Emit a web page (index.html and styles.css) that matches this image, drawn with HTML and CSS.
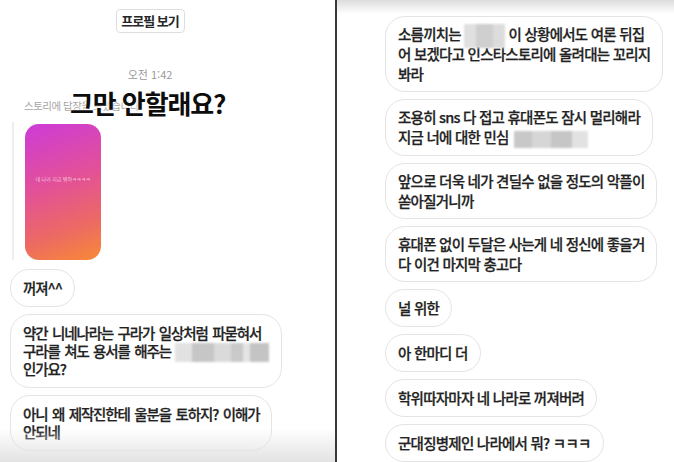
FILE: index.html
```html
<!DOCTYPE html>
<html lang="ko">
<head>
    <meta charset="UTF-8">
    <meta name="viewport" content="width=device-width, initial-scale=1.0">
    <title>DM</title>
    <link rel="stylesheet" href="styles.css">
</head>
<body>
    <div class="screen">
        <section class="panel left">
            <div class="top">
                <button class="profile-btn">프로필 보기</button>
                <div class="time">오전 1:42</div>
            </div>
            <div class="story-label">스토리에 답장을 보냈습니다</div>
            <div class="caption">그만 안할래요?</div>
            <div class="story-quote">
                <div class="story-card"><span>내 나라 지금 뭐야ㅋㅋㅋㅋ</span></div>
            </div>
            <div class="thread">
                <div class="bubble">꺼져^^</div>
                <div class="bubble">약간 니네나라는 구라가 일상처럼 파묻혀서<br>구라를 쳐도 용서를 해주는 <span class="blur blur-a"></span><br>인가요?</div>
                <div class="bubble">아니 왜 제작진한테 울분을 토하지? 이해가<br>안되네</div>
            </div>
        </section>

        <section class="panel right">
            <div class="thread">
                <div class="bubble">소름끼치는 <span class="blur blur-b"></span> 이 상황에서도 여론 뒤집<br>어 보겠다고 인스타스토리에 올려대는 꼬리지<br>봐라</div>
                <div class="bubble">조용히 sns 다 접고 휴대폰도 잠시 멀리해라<br>지금 너에 대한 민심 <span class="blur blur-c"></span></div>
                <div class="bubble">앞으로 더욱 네가 견딜수 없을 정도의 악플이<br>쏟아질거니까</div>
                <div class="bubble">휴대폰 없이 두달은 사는게 네 정신에 좋을거<br>다 이건 마지막 충고다</div>
                <div class="bubble">널 위한</div>
                <div class="bubble">아 한마디 더</div>
                <div class="bubble">학위따자마자 네 나라로 꺼져버려</div>
                <div class="bubble">군대징병제인 나라에서 뭐? ㅋㅋㅋ</div>
            </div>
        </section>
    </div>
</body>
</html>
```

FILE: styles.css
```css
body {
    margin: 0;
    background: #fff;
    font-family: "Noto Sans CJK KR", "Noto Sans", sans-serif;
    color: #222;
}
.screen {
    display: flex;
    width: 674px;
    height: 462px;
    overflow: hidden;
}
.panel {
    position: relative;
    height: 462px;
    box-sizing: border-box;
}
.left {
    width: 337px;
    padding-left: 10px;
    border-right: 2px solid #383838;
}
.left::after {
    content: "";
    position: absolute;
    left: 0;
    right: 0;
    bottom: 0;
    height: 34px;
    background: linear-gradient(rgba(230, 230, 230, 0), #e3e3e3);
}
.right {
    flex: 1;
    padding-left: 48px;
    padding-top: 16px;
}
.right::before {
    content: "";
    position: absolute;
    left: 0;
    right: 0;
    top: 0;
    height: 14px;
    background: linear-gradient(#dcdcdc, rgba(230, 230, 230, 0));
}
.top {
    width: 280px;
    text-align: center;
    padding-top: 7px;
}
.profile-btn {
    width: 69px;
    height: 24px;
    padding: 0;
    border: 1px solid #dedede;
    border-radius: 4px;
    background: #fff;
    font-family: inherit;
    font-size: 13px;
    font-weight: 700;
    color: #262626;
    letter-spacing: -1px;
}
.time {
    margin-top: 34px;
    font-size: 11px;
    line-height: 14px;
    color: #9a9a9a;
}
.story-label {
    margin-top: 18px;
    margin-left: 14px;
    font-size: 10.5px;
    line-height: 14px;
    color: #a5a5a5;
    letter-spacing: -0.5px;
}
.caption {
    position: absolute;
    left: 70px;
    top: 84px;
    font-size: 26px;
    font-weight: 700;
    color: #0d0d0d;
    letter-spacing: -1.1px;
    text-shadow: 0 0 3px #fff, 0 0 3px #fff;
}
.story-quote {
    margin-top: 9px;
    margin-left: 2px;
    height: 138px;
    border-left: 2px solid #eeeeee;
    padding-left: 11px;
    padding-top: 2px;
    box-sizing: border-box;
}
.story-card {
    width: 76px;
    height: 136px;
    border-radius: 14px;
    background: linear-gradient(160deg, #cd3bd8 0%, #e2509a 42%, #ec6a63 75%, #f88a36 100%);
    display: flex;
    align-items: center;
    justify-content: center;
}
.story-card span {
    font-size: 5px;
    color: rgba(255, 255, 255, 0.7);
    margin-bottom: 26px;
    white-space: nowrap;
}
.thread {
    display: flex;
    flex-direction: column;
    align-items: flex-start;
    gap: 7px;
}
.left .thread {
    margin-top: 9px;
}
.bubble {
    border: 1px solid #e4e4e4;
    border-radius: 20px;
    white-space: nowrap;
    font-weight: 500;
    font-size: 14.5px;
    -webkit-text-stroke: 0.25px #222;
}
.left .bubble {
    padding: 9px 12px;
    line-height: 18px;
    letter-spacing: -1.1px;
    word-spacing: 1.5px;
}
.right .bubble {
    padding: 7px 12px;
    line-height: 20px;
    letter-spacing: -0.75px;
}
.right .bubble:nth-child(n+5) {
    padding: 8px 12px;
}
.blur {
    display: inline-block;
    vertical-align: middle;
    filter: blur(1px);
}
.blur-a {
    width: 94px;
    height: 19px;
    margin: -2px 0;
    background: linear-gradient(90deg, #e2e2e2 0 18%, #c6c6c6 18% 42%, #dadada 42% 60%, #c9c9c9 60% 72%, #e4e4e4 72% 80%, #c4c4c4 80% 100%);
}
.blur-b {
    width: 41px;
    height: 24px;
    margin: -4px 0;
    background: linear-gradient(90deg, #e0e0e0 0 30%, #cfcfcf 30% 70%, #dcdcdc 70% 100%);
}
.blur-c {
    width: 74px;
    height: 17px;
    margin-left: 2px;
    background: linear-gradient(90deg, #c8c8c8 0 25%, #d6d6d6 25% 50%, #c6c6c6 50% 78%, #e2e2e2 78% 100%);
}
```
